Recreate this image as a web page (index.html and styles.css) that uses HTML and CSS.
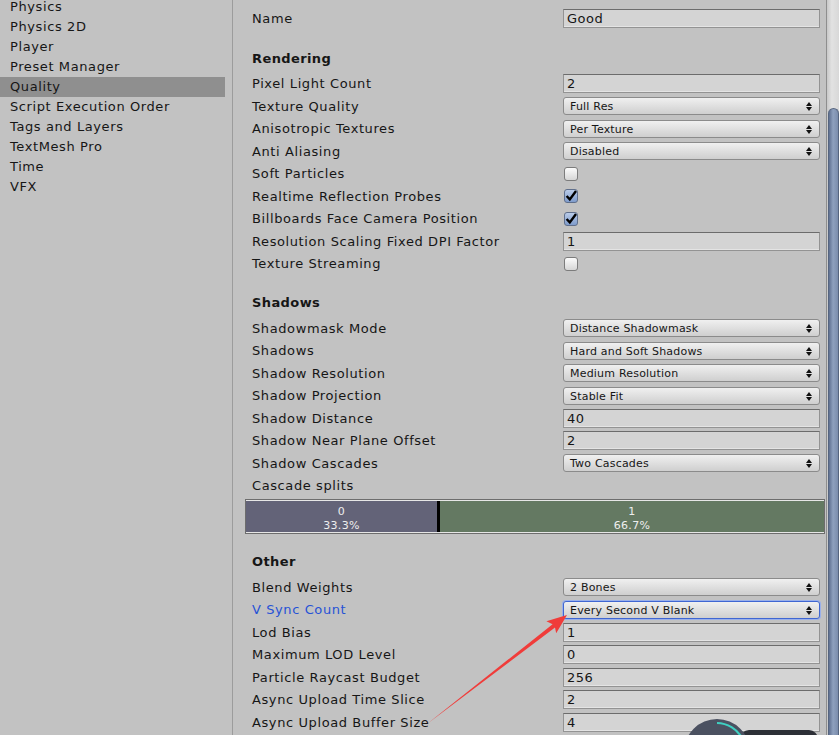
FILE: index.html
```html
<!DOCTYPE html>
<html>
<head>
<meta charset="utf-8">
<link rel="stylesheet" href="styles.css">
</head>
<body>
<div class="app">
  <aside class="sidebar">
    <ul class="nav">
      <li>Physics</li>
      <li>Physics 2D</li>
      <li>Player</li>
      <li>Preset Manager</li>
      <li class="active">Quality</li>
      <li>Script Execution Order</li>
      <li>Tags and Layers</li>
      <li>TextMesh Pro</li>
      <li>Time</li>
      <li>VFX</li>
    </ul>
  </aside>
  <main class="inspector">
    <div class="content">
      <div class="row first"><span class="label">Name</span><div class="field text">Good</div></div>

      <h3 class="section">Rendering</h3>
      <div class="row"><span class="label">Pixel Light Count</span><div class="field text">2</div></div>
      <div class="row"><span class="label">Texture Quality</span><div class="field drop"><span>Full Res</span><i class="updown"></i></div></div>
      <div class="row"><span class="label">Anisotropic Textures</span><div class="field drop"><span>Per Texture</span><i class="updown"></i></div></div>
      <div class="row"><span class="label">Anti Aliasing</span><div class="field drop"><span>Disabled</span><i class="updown"></i></div></div>
      <div class="row"><span class="label">Soft Particles</span><div class="check"></div></div>
      <div class="row"><span class="label">Realtime Reflection Probes</span><div class="check on"><svg viewBox="0 0 14 14" width="14" height="14"><path d="M2.6 7 L5.8 10.4 L12 2" fill="none" stroke="#000" stroke-width="2.4"/></svg></div></div>
      <div class="row"><span class="label">Billboards Face Camera Position</span><div class="check on"><svg viewBox="0 0 14 14" width="14" height="14"><path d="M2.6 7 L5.8 10.4 L12 2" fill="none" stroke="#000" stroke-width="2.4"/></svg></div></div>
      <div class="row"><span class="label">Resolution Scaling Fixed DPI Factor</span><div class="field text">1</div></div>
      <div class="row"><span class="label">Texture Streaming</span><div class="check"></div></div>

      <h3 class="section">Shadows</h3>
      <div class="row"><span class="label">Shadowmask Mode</span><div class="field drop"><span>Distance Shadowmask</span><i class="updown"></i></div></div>
      <div class="row"><span class="label">Shadows</span><div class="field drop"><span>Hard and Soft Shadows</span><i class="updown"></i></div></div>
      <div class="row"><span class="label">Shadow Resolution</span><div class="field drop"><span>Medium Resolution</span><i class="updown"></i></div></div>
      <div class="row"><span class="label">Shadow Projection</span><div class="field drop"><span>Stable Fit</span><i class="updown"></i></div></div>
      <div class="row"><span class="label">Shadow Distance</span><div class="field text">40</div></div>
      <div class="row"><span class="label">Shadow Near Plane Offset</span><div class="field text">2</div></div>
      <div class="row"><span class="label">Shadow Cascades</span><div class="field drop"><span>Two Cascades</span><i class="updown"></i></div></div>
      <div class="row"><span class="label">Cascade splits</span></div>
      <div class="cascade">
        <div class="seg seg-a" style="width:191px"><span>0</span><span>33.3%</span></div>
        <div class="split"></div>
        <div class="seg seg-b"><span>1</span><span>66.7%</span></div>
      </div>

      <h3 class="section">Other</h3>
      <div class="row"><span class="label">Blend Weights</span><div class="field drop"><span>2 Bones</span><i class="updown"></i></div></div>
      <div class="row"><span class="label focus">V Sync Count</span><div class="field drop focused"><span>Every Second V Blank</span><i class="updown"></i></div></div>
      <div class="row"><span class="label">Lod Bias</span><div class="field text">1</div></div>
      <div class="row"><span class="label">Maximum LOD Level</span><div class="field text">0</div></div>
      <div class="row"><span class="label">Particle Raycast Budget</span><div class="field text">256</div></div>
      <div class="row"><span class="label">Async Upload Time Slice</span><div class="field text">2</div></div>
      <div class="row"><span class="label">Async Upload Buffer Size</span><div class="field text">4</div></div>
    </div>
    <div class="scrollbar"><div class="thumb"></div></div>
  </main>
</div>

<div class="widget">
  <div class="widget-bar"></div>
  <div class="widget-dial">
    <svg viewBox="0 0 66 66" width="66" height="66"><path d="M33 4 A29 29 0 0 1 58 19" fill="none" stroke="#3fd0c2" stroke-width="2.2"/></svg>
  </div>
</div>

<svg class="annot" width="839" height="735" viewBox="0 0 839 735">
  <polygon points="427,724 552.6,624.3 546.4,621.2 567,615 556.2,633.2 555,627.6" fill="#f03c3a"/>
</svg>
</body>
</html>
```

FILE: styles.css
```css
* { box-sizing: border-box; }
html, body { margin: 0; padding: 0; }
body {
  width: 839px;
  height: 735px;
  overflow: hidden;
  background: #c2c2c2;
  font-family: "DejaVu Sans", Verdana, sans-serif;
  font-size: 13px;
  color: #161616;
  position: relative;
}
.app {
  display: flex;
  height: 735px;
  overflow: hidden;
}
.sidebar {
  width: 233px;
  flex: none;
  border-right: 1px solid #9c9c9c;
}
.nav {
  list-style: none;
  margin: -3px 0 0 0;
  padding: 0;
  width: 225px;
}
.nav li {
  height: 20px;
  line-height: 20px;
  padding-left: 10px;
  white-space: nowrap;
  letter-spacing: 0.6px;
}
.nav li.active {
  background: #8f8f8f;
}
.inspector {
  flex: 1;
  display: flex;
  min-width: 0;
}
.content {
  width: 593px;
  padding: 7px 0 0 19px;
}
.row {
  display: grid;
  grid-template-columns: 311px 257px;
  align-items: center;
  height: 22.5px;
}
.row.first {
  height: 23.5px;
  padding-bottom: 1px;
}
.label {
  white-space: nowrap;
  letter-spacing: 0.6px;
}
.label.focus {
  color: #2752d6;
}
.section {
  margin: 17px 0 3px 0;
  height: 22px;
  line-height: 22px;
  font-size: 13px;
  font-weight: bold;
  letter-spacing: 0.4px;
}
.field {
  height: 19px;
  display: flex;
  align-items: center;
}
.field.text {
  background: #d4d4d4;
  border: 1px solid #939393;
  border-top-color: #6c6c6c;
  box-shadow: inset 0 -1px 0 #e4e4e4;
  padding-left: 3px;
  font-size: 13px;
  letter-spacing: 0.5px;
}
.field.drop {
  height: 18px;
  border: 1px solid #8b8b8b;
  border-radius: 3px;
  background: linear-gradient(#f0f0f0, #dcdcdc 60%, #cfcfcf);
  font-size: 11px;
  padding: 1px 6px 0 6px;
  justify-content: space-between;
  letter-spacing: 0.2px;
}
.field.drop.focused {
  border-color: #3f66d2;
  box-shadow: 0 0 0 1px #9ab0ea;
}
.updown {
  width: 6px;
  height: 9px;
  position: relative;
  flex: none;
  margin-right: 1px;
}
.updown::before, .updown::after {
  content: "";
  position: absolute;
  left: 0;
  border-left: 3px solid transparent;
  border-right: 3px solid transparent;
}
.updown::before { top: 0; border-bottom: 4px solid #111; }
.updown::after { bottom: 0; border-top: 4px solid #111; }
.check {
  width: 14px;
  height: 14px;
  margin-left: 1px;
  border: 1px solid #7c7c7c;
  border-radius: 3px;
  background: linear-gradient(#fbfbfb, #d6d6d6);
  position: relative;
}
.check.on {
  background: linear-gradient(#b9cbe8, #7f9ccc);
  border-color: #5f6f8c;
}
.check svg {
  position: absolute;
  left: -1px;
  top: -1px;
}
.cascade {
  margin: 2px 0 0 -7px;
  width: 580px;
  height: 35px;
  border: 1px solid #6d6d6d;
  display: flex;
  box-shadow: inset 0 1px 0 #e6e6e6, inset 0 -1px 0 #e6e6e6;
  padding: 1px 0;
  background: #c2c2c2;
}
.seg {
  display: flex;
  flex-direction: column;
  align-items: center;
  justify-content: center;
  padding-top: 4px;
  color: #eeeeee;
  font-size: 11px;
  line-height: 14px;
  letter-spacing: 0.3px;
}
.seg-a { background: #636378; flex: none; }
.split { width: 3px; background: #000; flex: none; }
.seg-b { background: #647962; flex: 1; }
.scrollbar {
  width: 13px;
  flex: none;
  border-left: 1px solid #8e8e8e;
  background: linear-gradient(90deg, #c8c8c8, #e2e2e2 40%, #d8d8d8);
  padding-top: 108px;
}
.thumb {
  height: 100%;
  margin-left: 1px;
  border-radius: 7px 7px 0 0;
  background: linear-gradient(90deg, #5f7090, #8ea0be 45%, #7b8dac);
  border: 1px solid #56657f;
  border-bottom: none;
}
.widget {
  position: absolute;
  left: 684px;
  top: 719px;
  width: 134px;
  height: 16px;
  overflow: hidden;
}
.widget-bar {
  position: absolute;
  left: 56px;
  top: 11px;
  width: 78px;
  height: 30px;
  border-radius: 9px;
  background: #2d3037;
}
.widget-dial {
  position: absolute;
  left: 0;
  top: 0;
  width: 66px;
  height: 66px;
  border-radius: 50%;
  background: #4b5161;
}
.widget-dial svg { display: block; }
.annot {
  position: absolute;
  left: 0;
  top: 0;
  pointer-events: none;
}
```
